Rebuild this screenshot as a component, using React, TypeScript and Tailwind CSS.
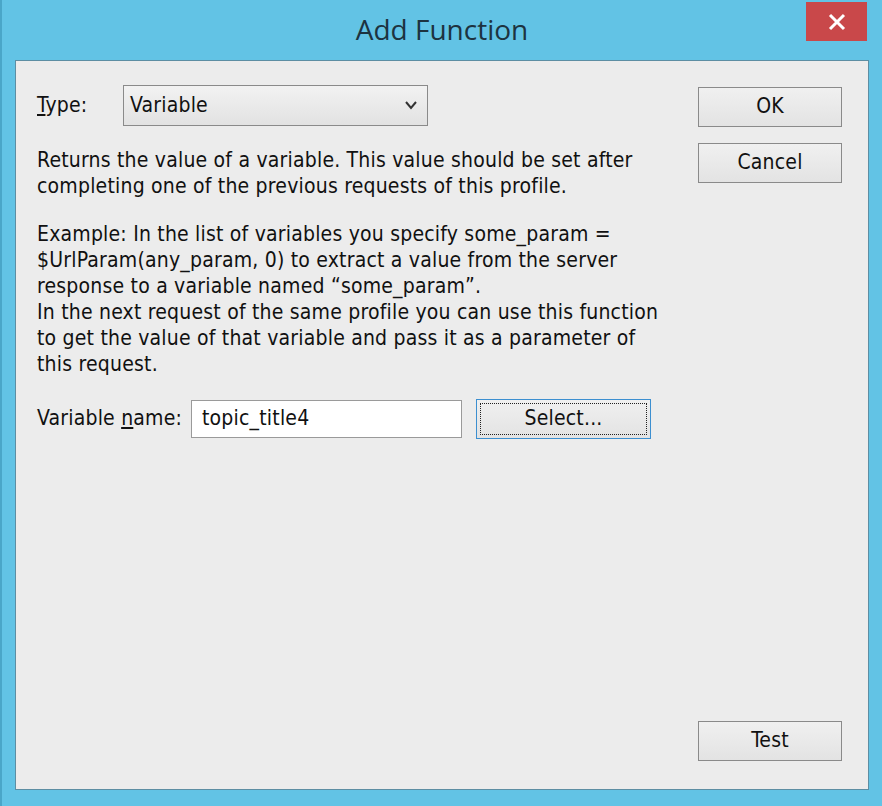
import React from 'react'

function WinButton({ label, focused }: { label: string; focused?: boolean }) {
  if (focused) {
    return (
      <button className="h-[40px] w-[175px] border border-[#3c8fd0] bg-gradient-to-b from-[#f0f0f0] to-[#e3e3e3] p-[3px] text-[21px] text-[#111]">
        <span className="flex h-full w-full items-center justify-center border border-dotted border-[#222]">{label}</span>
      </button>
    )
  }
  return (
    <button className="flex h-[40px] w-[144px] items-center justify-center border border-[#8a8a8a] bg-gradient-to-b from-[#f0f0f0] to-[#e3e3e3] text-[21px] text-[#111]">
      {label}
    </button>
  )
}

export default function App() {
  return (
    <div
      className="flex h-[806px] w-[882px] flex-col bg-[#62c3e5] border-l-2 border-[#4aa6c8]"
      style={{ fontFamily: '"DejaVu Sans Condensed", "DejaVu Sans", sans-serif' }}
    >
      {/* title bar */}
      <div className="relative flex h-[60px] items-center justify-center">
        <span className="pb-[2px] text-[28px] text-[#1d3340]" style={{ fontFamily: '"Open Sans", sans-serif' }}>
          Add Function
        </span>
        <div className="absolute right-[15px] top-[2px] flex h-[39px] w-[61px] items-center justify-center bg-[#c9484a]">
          <svg width="18" height="18" viewBox="0 0 18 18">
            <path d="M2 2 L16 16 M16 2 L2 16" stroke="#fff" strokeWidth="3" />
          </svg>
        </div>
      </div>

      {/* client area */}
      <div className="mx-[13px] mb-[16px] flex flex-1 border border-[#5d8ea3] bg-[#ececec] text-[21px] tracking-[0.2px] text-[#111]">
        <div className="flex flex-1 flex-col pl-[21px] pt-[24px]">
          <div className="flex items-center">
            <span className="w-[86px]">
              <span className="underline underline-offset-2">T</span>ype:
            </span>
            <div className="flex h-[41px] w-[305px] items-center justify-between border border-[#8a8a8a] bg-gradient-to-b from-[#f2f2f2] to-[#e2e2e2] pl-[6px] pr-[10px]">
              <span>Variable</span>
              <svg width="12" height="9" viewBox="0 0 12 9">
                <path d="M1 1 L6 7 L11 1" stroke="#333" strokeWidth="2" fill="none" />
              </svg>
            </div>
          </div>

          <div className="mt-[21px] leading-[26px]">
            <div>Returns the value of a variable. This value should be set after</div>
            <div>completing one of the previous requests of this profile.</div>
          </div>

          <div className="mt-[22px] leading-[26px]">
            <div>Example: In the list of variables you specify some_param =</div>
            <div>$UrlParam(any_param, 0) to extract a value from the server</div>
            <div>response to a variable named “some_param”.</div>
            <div>In the next request of the same profile you can use this function</div>
            <div>to get the value of that variable and pass it as a parameter of</div>
            <div>this request.</div>
          </div>

          <div className="mt-[22px] flex items-center">
            <span className="w-[154px]">
              Variable <span className="underline underline-offset-2">n</span>ame:
            </span>
            <div className="flex h-[38px] w-[271px] items-center border border-[#9a9a9a] bg-white pl-[10px]">
              topic_title4
            </div>
            <div className="ml-[14px]">
              <WinButton label="Select..." focused />
            </div>
          </div>
        </div>

        <div className="flex w-[170px] flex-col pt-[26px]">
          <WinButton label="OK" />
          <div className="mt-[16px]">
            <WinButton label="Cancel" />
          </div>
          <div className="mt-auto mb-[28px]">
            <WinButton label="Test" />
          </div>
        </div>
      </div>
    </div>
  )
}
